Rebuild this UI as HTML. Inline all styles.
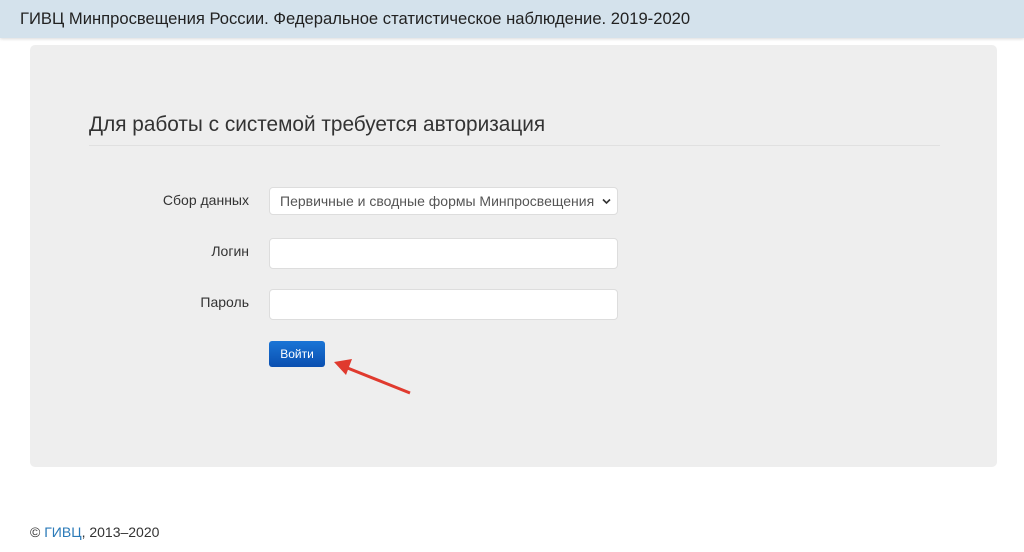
<!DOCTYPE html>
<html><head><meta charset="utf-8"><style>
body{margin:0;width:1024px;height:552px;background:#fff;font-family:"Liberation Sans",sans-serif;position:relative;overflow:hidden;color:#333}
.hdr{position:absolute;left:0;top:0;width:1024px;height:38px;background:#d4e2ec;box-shadow:0 1px 3px rgba(0,0,0,.15)}
.hdr span{position:absolute;left:20px;top:9px;font-size:16.6px;color:#222}
.panel{position:absolute;left:30px;top:45px;width:967px;height:422px;background:#eeeeee;border-radius:5px}
.title{position:absolute;left:89px;top:113px;font-size:20.8px;color:#333}
.line{position:absolute;left:89px;top:145px;width:851px;height:1px;background:#e0e0e0}
.lbl{position:absolute;width:180px;left:69px;text-align:right;font-size:14px;color:#333}
.inp{position:absolute;left:269px;width:347px;background:#fff;border:1px solid #ddd;border-radius:4px}
.sel{font-size:14px;color:#555;padding-left:10px;box-sizing:border-box;width:349px;line-height:26px}
.btn{position:absolute;left:269px;top:341px;width:56px;height:26px;border-radius:3px;background:linear-gradient(#1a75d6,#0a4fb0);color:#fff;font-size:12px;text-align:center;line-height:26px}
.ft{position:absolute;left:30px;top:524px;font-size:14px;color:#333}
.ft a{color:#2a7ab8;text-decoration:none}
</style></head><body>
<div class="hdr"><span>ГИВЦ Минпросвещения России. Федеральное статистическое наблюдение. 2019-2020</span></div>
<div class="panel"></div>
<div class="title">Для работы с системой требуется авторизация</div>
<div class="line"></div>
<div class="lbl" style="top:192px">Сбор данных</div>
<div class="inp sel" style="top:187px;height:28px">Первичные и сводные формы Минпросвещения
<svg style="position:absolute;right:6px;top:10px" width="9" height="7" viewBox="0 0 9 7"><path d="M1 1.5L4.5 5 8 1.5" stroke="#333" stroke-width="1.6" fill="none"/></svg></div>
<div class="lbl" style="top:243px">Логин</div>
<div class="inp" style="top:238px;height:29px"></div>
<div class="lbl" style="top:294px">Пароль</div>
<div class="inp" style="top:289px;height:29px"></div>
<div class="btn">Войти</div>
<svg style="position:absolute;left:0;top:0" width="1024" height="552"><line x1="410" y1="393" x2="345" y2="367" stroke="#e03a2e" stroke-width="3"/><path d="M334 362L352 359 346 375Z" fill="#e03a2e"/></svg>
<div class="ft">© <a>ГИВЦ</a>, 2013–2020</div>
</body></html>
